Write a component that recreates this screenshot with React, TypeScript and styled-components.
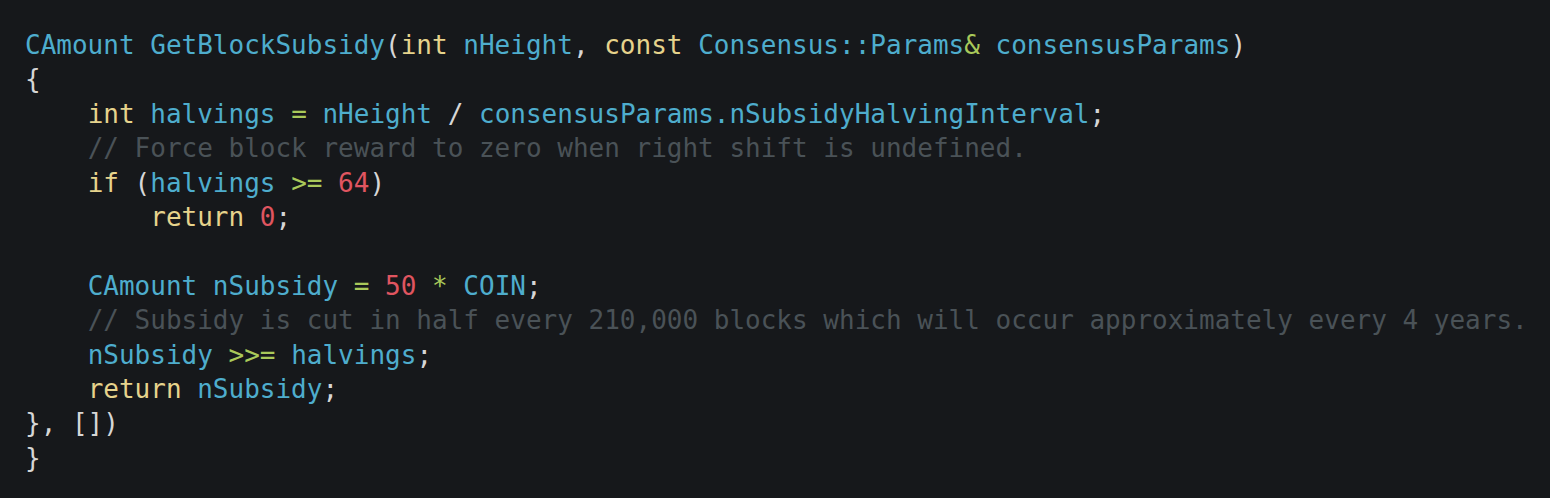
import React from "react";
import styled, { createGlobalStyle } from "styled-components";

const Global = createGlobalStyle`
  html, body { margin: 0; padding: 0; background: #16181b; }
  #root { width: 1550px; height: 498px; }
`;

type Kind = "id" | "kw" | "op" | "num" | "com" | "pun";

const colors: Record<Kind, string> = {
  id: "#4eadcd",
  kw: "#e6d38c",
  op: "#a9c95a",
  num: "#e05560",
  com: "#4a5257",
  pun: "#d6d6d6",
};

const Frame = styled.div`
  box-sizing: border-box;
  width: 1550px;
  height: 498px;
  background: #16181b;
  padding: 28px 0 0 25px;
  overflow: hidden;
`;

const Code = styled.pre`
  margin: 0;
  font-family: "DejaVu Sans Mono", "Liberation Mono", monospace;
  font-size: 26px;
  line-height: 34.4px;
  color: #d6d6d6;
  white-space: pre;
`;

const Line = styled.div`
  height: 34.4px;
`;

const Tok = styled.span<{ $k: Kind }>`
  color: ${(p) => colors[p.$k]};
`;

type T = [Kind, string];
const I = (s: string): T => ["id", s];
const K = (s: string): T => ["kw", s];
const O = (s: string): T => ["op", s];
const N = (s: string): T => ["num", s];
const C = (s: string): T => ["com", s];
const P = (s: string): T => ["pun", s];

const lines: T[][] = [
  [I("CAmount GetBlockSubsidy"), P("("), K("int"), P(" "), I("nHeight"), P(", "), K("const"), P(" "), I("Consensus::Params"), O("&"), P(" "), I("consensusParams"), P(")")],
  [P("{")],
  [P("    "), K("int"), P(" "), I("halvings"), P(" "), O("="), P(" "), I("nHeight"), P(" / "), I("consensusParams.nSubsidyHalvingInterval"), P(";")],
  [P("    "), C("// Force block reward to zero when right shift is undefined.")],
  [P("    "), K("if"), P(" ("), I("halvings"), P(" "), O(">="), P(" "), N("64"), P(")")],
  [P("        "), K("return"), P(" "), N("0"), P(";")],
  [],
  [P("    "), I("CAmount nSubsidy"), P(" "), O("="), P(" "), N("50"), P(" "), O("*"), P(" "), I("COIN"), P(";")],
  [P("    "), C("// Subsidy is cut in half every 210,000 blocks which will occur approximately every 4 years.")],
  [P("    "), I("nSubsidy"), P(" "), O(">>="), P(" "), I("halvings"), P(";")],
  [P("    "), K("return"), P(" "), I("nSubsidy"), P(";")],
  [P("}, [])")],
  [P("}")],
];

export default function App() {
  return (
    <>
      <Global />
      <Frame>
        <Code>
          {lines.map((toks, i) => (
            <Line key={i}>
              {toks.map(([k, s], j) => (
                <Tok key={j} $k={k}>
                  {s}
                </Tok>
              ))}
            </Line>
          ))}
        </Code>
      </Frame>
    </>
  );
}
